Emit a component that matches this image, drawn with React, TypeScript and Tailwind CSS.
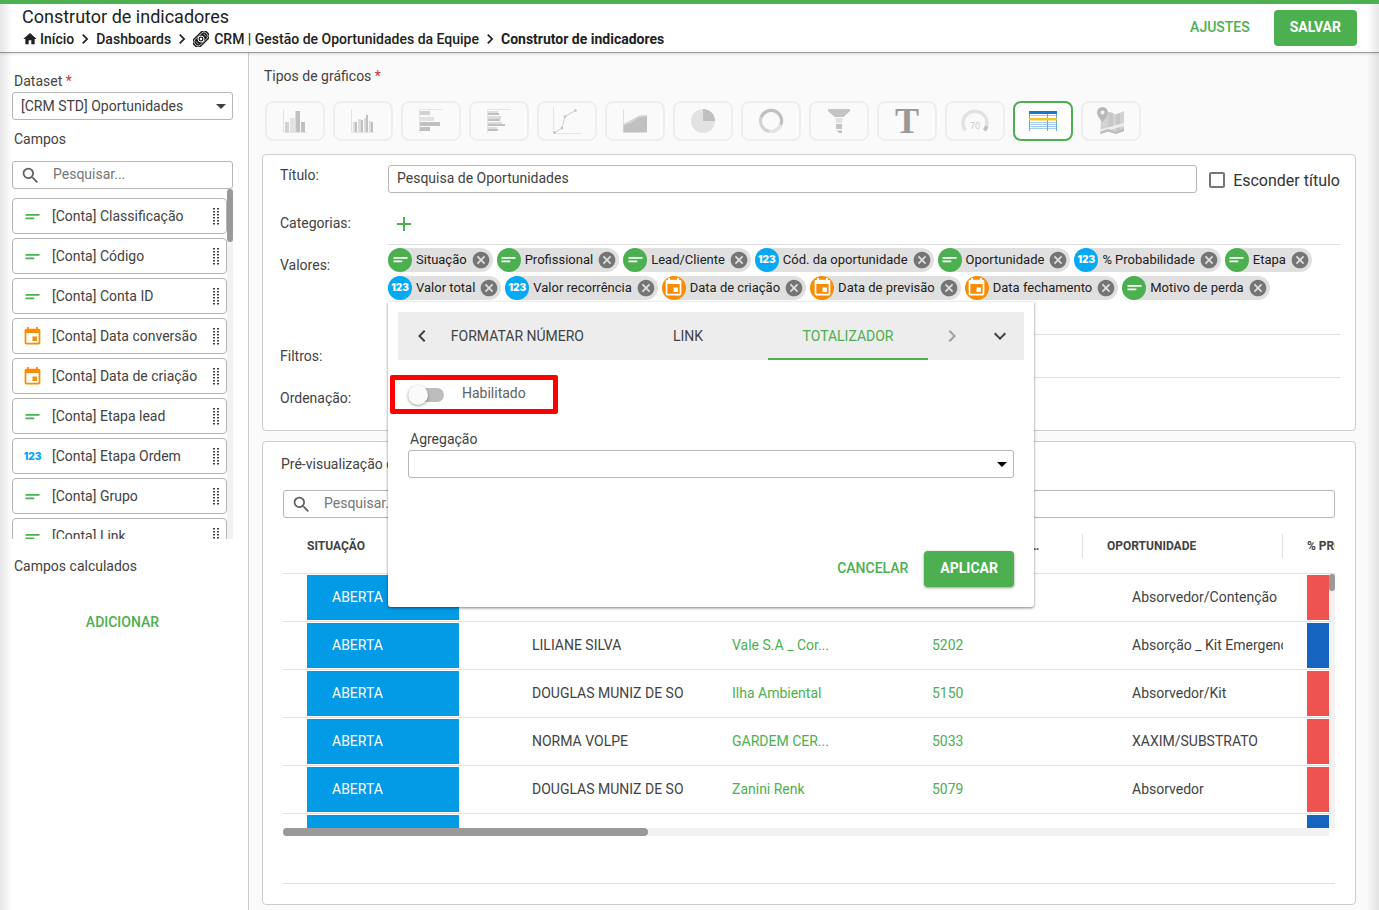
import { useState } from 'react';
import type { ReactNode } from 'react';
import {
  MdAdd,
  MdArrowDropDown,
  MdCancel,
  MdChevronLeft,
  MdChevronRight,
  MdEvent,
  MdExpandMore,
  MdHome,
  MdSearch,
  MdShortText,
} from 'react-icons/md';

type FieldType = 'text' | 'number' | 'date';

const fields: { type: FieldType; label: string }[] = [
  { type: 'text', label: '[Conta] Classificação' },
  { type: 'text', label: '[Conta] Código' },
  { type: 'text', label: '[Conta] Conta ID' },
  { type: 'date', label: '[Conta] Data conversão' },
  { type: 'date', label: '[Conta] Data de criação' },
  { type: 'text', label: '[Conta] Etapa lead' },
  { type: 'number', label: '[Conta] Etapa Ordem' },
  { type: 'text', label: '[Conta] Grupo' },
  { type: 'text', label: '[Conta] Link' },
];

const values: { type: FieldType; label: string }[] = [
  { type: 'text', label: 'Situação' },
  { type: 'text', label: 'Profissional' },
  { type: 'text', label: 'Lead/Cliente' },
  { type: 'number', label: 'Cód. da oportunidade' },
  { type: 'text', label: 'Oportunidade' },
  { type: 'number', label: '% Probabilidade' },
  { type: 'text', label: 'Etapa' },
  { type: 'number', label: 'Valor total' },
  { type: 'number', label: 'Valor recorrência' },
  { type: 'date', label: 'Data de criação' },
  { type: 'date', label: 'Data de previsão' },
  { type: 'date', label: 'Data fechamento' },
  { type: 'text', label: 'Motivo de perda' },
];

const columns = ['SITUAÇÃO', 'PROFISSIONAL', 'LEAD/CLIENTE', 'CÓD. DA OPORTUNIDADE', 'OPORTUNIDADE', '% PROBABILIDADE'];

const rows = [
  { owner: '', client: '', code: '', name: 'Absorvedor/Contenção', color: 'bg-[#ef5350]' },
  { owner: 'LILIANE SILVA', client: 'Vale S.A _ Cor...', code: '5202', name: 'Absorção _ Kit Emergencial', color: 'bg-[#1565c0]' },
  { owner: 'DOUGLAS MUNIZ DE SOUZA', client: 'Ilha Ambiental', code: '5150', name: 'Absorvedor/Kit', color: 'bg-[#ef5350]' },
  { owner: 'NORMA VOLPE', client: 'GARDEM CER...', code: '5033', name: 'XAXIM/SUBSTRATO', color: 'bg-[#ef5350]' },
  { owner: 'DOUGLAS MUNIZ DE SOUZA', client: 'Zanini Renk', code: '5079', name: 'Absorvedor', color: 'bg-[#ef5350]' },
  { owner: '', client: '', code: '', name: '', color: 'bg-[#1565c0]' },
];

const chartTypes: { name: string; width: number; height: number; art: ReactNode }[] = [
  {
    name: 'Colunas',
    width: 24,
    height: 24,
    art: (
      <>
        <path d="M.5 0v23.5H24" fill="none" stroke="#e4e4e4" />
        <path d="M2 13h4v10H2z" fill="#d2d2d2" />
        <path d="M7 9h5v14H7z" fill="#e2e2e2" />
        <path d="M12.500 2h4.500v21h-4.500zM18 13h4v10h-4z" fill="#c0c0c0" />
      </>
    ),
  },
  {
    name: 'Colunas agrupadas',
    width: 24,
    height: 24,
    art: (
      <>
        <path d="M.5 0v23.5H24" fill="none" stroke="#e4e4e4" />
        <path d="M2 13h2v10H2zM7 10h3v13H7zM13 9h2v14h-2zM18 12h2v11h-2z" fill="#dcdcdc" />
        <path d="M4 13h2v10H4zM10 11h2v12h-2zM15 6h2v17h-2zM20 13h2v10h-2z" fill="#c0c0c0" />
      </>
    ),
  },
  {
    name: 'Barras',
    width: 24,
    height: 24,
    art: (
      <>
        <path d="M24 .5H.5V24" fill="none" stroke="#e4e4e4" />
        <path d="M1 2h10v4H1z" fill="#d2d2d2" />
        <path d="M1 8h14v4H1z" fill="#e2e2e2" />
        <path d="M1 13h20v4H1zM1 18h10v4H1z" fill="#c0c0c0" />
      </>
    ),
  },
  {
    name: 'Barras agrupadas',
    width: 24,
    height: 24,
    art: (
      <>
        <path d="M24 .5H.5V24" fill="none" stroke="#e4e4e4" />
        <path d="M1 2h10v2H1zM1 7h13v3H1zM1 13h14v2H1zM1 18h9v2H1z" fill="#dcdcdc" />
        <path d="M1 4h11v2H1zM1 10h12v2H1zM1 15h17v2H1zM1 20h10v2H1z" fill="#c0c0c0" />
      </>
    ),
  },
  {
    name: 'Linhas',
    width: 28,
    height: 28,
    art: (
      <>
        <path d="M.5 0v26.5H28" fill="none" stroke="#e4e4e4" />
        <path d="M1.700 25.500 9 21l3-11.500 10.500-6" fill="none" stroke="#c8c8c8" strokeWidth="0.900" />
        <g fill="#bdbdbd">
          <circle cx="1.700" cy="25.500" r="1.200" />
          <circle cx="9" cy="21" r="1.200" />
          <circle cx="12" cy="9.500" r="1.200" />
          <circle cx="22.500" cy="3.500" r="1.200" />
        </g>
      </>
    ),
  },
  {
    name: 'Área',
    width: 24,
    height: 24,
    art: (
      <>
        <path d="M.5 0v23.500" stroke="#e0e0e0" />
        <path d="M.5 15 8 11l8-4.500L24 6v17H.5z" fill="#d6d6d6" />
        <path d="M.5 16.500 8 14l8-5.500L24 7v16.500H.5z" fill="#c0c0c0" />
      </>
    ),
  },
  {
    name: 'Pizza',
    width: 24,
    height: 24,
    art: (
      <>
        <circle cx="12" cy="12" r="12" fill="#e2e2e2" />
        <path d="M12 0a12 12 0 0 1 12 12H12z" fill="#c0c0c0" />
      </>
    ),
  },
  {
    name: 'Rosca',
    width: 24,
    height: 24,
    art: (
      <g fill="none" strokeWidth="3">
        <circle cx="12" cy="12" r="10.500" stroke="#d2d2d2" />
        <path d="M22 15.500A10.500 10.500 0 0 1 10 22.300" stroke="#e4e4e4" />
        <path d="M2.200 8.200A10.500 10.500 0 1 1 22 15.500" stroke="#c0c0c0" />
      </g>
    ),
  },
  {
    name: 'Funil',
    width: 24,
    height: 24,
    art: (
      <>
        <path d="M1 0h22v2l-6.500 6h-9L1 2z" fill="#c4c4c4" />
        <path d="M8.500 9h7.500l-1 5H9z" fill="#e2e2e2" />
        <path d="M9 15h6v5H9z" fill="#c4c4c4" />
        <path d="M9.500 21.500H15V24h-3z" fill="#c0c0c0" />
      </>
    ),
  },
  {
    name: 'Texto',
    width: 28,
    height: 26,
    art: (
      <text x="14" y="25" textAnchor="middle" fontFamily="Liberation Serif, serif" fontWeight="700" fontSize="36" fill="#999">
        T
      </text>
    ),
  },
  {
    name: 'Medidor',
    width: 28,
    height: 28,
    art: (
      <>
        <path d="M4.500 23.500a12 12 0 1 1 19 0" fill="none" stroke="#e2e2e2" strokeWidth="3.500" />
        <path d="M25.600 19a12 12 0 0 1-2.100 4.500" fill="none" stroke="#c0c0c0" strokeWidth="3.500" />
        <text x="14" y="22" textAnchor="middle" fontFamily="Open Sans, sans-serif" fontSize="9" fill="#c8c8c8">
          70
        </text>
      </>
    ),
  },
  {
    name: 'Tabela',
    width: 28,
    height: 20,
    art: (
      <>
        <path d="M0 0h28v3H0z" fill="#1976d2" />
        <path d="M0 4.500h28M0 11.500h28M0 13.500h28M0 15.500h28M0 17.500h28" stroke="#a4cdf4" />
        <path d="M.5 3v17M18.500 3v17M27.500 3v17" stroke="#64a8e8" />
        <path d="M0 7h28v2.500H0z" fill="#f4c430" />
      </>
    ),
  },
  {
    name: 'Mapa',
    width: 28,
    height: 28,
    art: (
      <>
        <path d="m4 7 8-2 7 2.500L27 4v20l-8 3-8-2.500L3.500 27z" fill="#d2d2d2" />
        <path d="m12 5 4 1v19l-5-1.500zM19 7.500 23 6v19l-4 2z" fill="#c6c6c6" />
        <path d="M3.500 22.500 27 16v3L3.500 25.500z" fill="#ededed" />
        <path d="M3.500 24.500 11 22l8 3 8-4v3l-8 3-8-2.500L3.500 27z" fill="#bdbdbd" />
        <path d="M5.500 0A5.500 5.500 0 0 1 11 5.500c0 4-5.500 9.500-5.500 9.500S0 9.500 0 5.500A5.500 5.500 0 0 1 5.500 0z" fill="#b8b8b8" />
        <circle cx="5.500" cy="5.500" r="2" fill="#f2f2f2" />
      </>
    ),
  },
];

function FieldIcon({ type }: { type: FieldType }) {
  if (type === 'date') return <MdEvent className="h-[21px] w-[21px] text-[#fb8c00]" />;
  if (type === 'number') return <span className="font-['Inter'] text-[10px] font-black text-[#03a9f4]">123</span>;
  return <MdShortText className="h-[21px] w-[21px] text-[#4caf50]" />;
}

function ChipIcon({ type }: { type: FieldType }) {
  if (type === 'date') {
    return (
      <span className="flex h-6 w-6 items-center justify-center rounded-full bg-[#fb8c00] pb-[2px] text-white">
        <MdEvent className="h-[21px] w-[21px]" />
      </span>
    );
  }
  if (type === 'number') {
    return (
      <span className="flex h-6 w-6 items-center justify-center rounded-full bg-[#03a9f4] pb-[2px] font-['Inter'] text-[10px] font-black text-white">
        123
      </span>
    );
  }
  return (
    <span className="flex h-6 w-6 items-center justify-center rounded-full bg-[#4caf50] pb-[2px] text-white">
      <MdShortText className="h-[21px] w-[21px]" />
    </span>
  );
}

function DragHandle() {
  return (
    <svg width="7" height="17" viewBox="0 0 7 17" fill="#424242">
      {[0, 3, 6, 9, 12, 15].map((y) => (
        <g key={y}>
          <rect x="1" y={y} width="2" height="1.500" />
          <rect x="5" y={y} width="2" height="1.500" />
        </g>
      ))}
    </svg>
  );
}

function TicketIcon() {
  return (
    <svg width="16" height="16" viewBox="0 0 16 16" fill="none">
      <g transform="rotate(-45 8 8)">
        <rect x="-1.500" y="2.500" width="19" height="11" rx="4" fill="#212121" />
        <rect x="0.200" y="4.200" width="15.600" height="7.600" rx="2.800" stroke="#fff" strokeWidth="0.700" />
        <path d="M2.500 6v4M13.500 6v4" stroke="#fff" strokeWidth="0.600" />
      </g>
      <circle cx="8" cy="8" r="3" stroke="#fff" strokeWidth="1" />
      <circle cx="8" cy="8" r="1.200" fill="#fff" />
    </svg>
  );
}

function Header() {
  return (
    <header className="relative z-10 flex items-center justify-between border-t-4 border-b border-t-[#4caf50] border-b-[#9e9e9e] bg-white px-[22px] shadow-sm">
      <div className="py-[2px] text-[#212121]">
        <h1 className="text-lg leading-[22px]">Construtor de indicadores</h1>
        <nav className="flex items-center text-sm leading-[22px] font-medium">
          <a href="#" className="flex items-center gap-[2px]">
            <MdHome className="h-4 w-4" />
            Início
          </a>
          <MdChevronRight className="mx-px h-5 w-5" />
          <a href="#">Dashboards</a>
          <MdChevronRight className="mx-px h-5 w-5" />
          <a href="#" className="flex items-center gap-[5px]">
            <TicketIcon />
            CRM | Gestão de Oportunidades da Equipe
          </a>
          <MdChevronRight className="mx-px h-5 w-5" />
          <span className="font-bold">Construtor de indicadores</span>
        </nav>
      </div>
      <div className="flex items-center gap-6 text-sm font-medium">
        <button className="h-9 pb-[2px] text-[#4caf50]">AJUSTES</button>
        <button className="h-9 rounded bg-[#4caf50] px-4 pb-[2px] font-bold text-white">SALVAR</button>
      </div>
    </header>
  );
}

function Sidebar() {
  return (
    <aside className="w-[249px] shrink-0 border-r border-[#ccc] bg-white pt-[17px] pr-[15px] pl-3">
      <label htmlFor="dataset" className="block pl-[2px] leading-[22px]">
        Dataset <span className="text-[#d32f2f]">*</span>
      </label>
      <div className="relative">
        <select id="dataset" className="h-7 w-full appearance-none rounded-[3px] border border-[#b5b5b5] bg-white pl-2">
          <option>[CRM STD] Oportunidades</option>
        </select>
        <MdArrowDropDown className="pointer-events-none absolute top-[2px] right-0 h-6 w-6" />
      </div>
      <label htmlFor="field-search" className="mt-2 block pl-[2px] leading-[22px]">
        Campos
      </label>
      <div className="mt-[11px] flex h-7 items-center gap-3 rounded-[3px] border border-[#b5b5b5] pl-[7px]">
        <MdSearch className="h-[21px] w-[21px] shrink-0 text-[#616161]" />
        <input id="field-search" placeholder="Pesquisar..." className="w-full min-w-0 pb-[2px] outline-none placeholder:text-[#757575]" />
      </div>
      <div className="flex h-[350px] overflow-hidden">
        <ul className="flex flex-1 flex-col gap-1 pt-[9px]">
          {fields.map((field) => (
            <li key={field.label} className="flex h-9 shrink-0 items-center rounded border border-[#b5b5b5] pr-[7px]">
              <span className="flex w-[39px] justify-center">
                <FieldIcon type={field.type} />
              </span>
              <span className="flex-1 whitespace-nowrap">{field.label}</span>
              <DragHandle />
            </li>
          ))}
        </ul>
        <div className="w-[6px] bg-[#f2f2f2]">
          <div className="h-[53px] rounded-[3px] bg-[#999]"></div>
        </div>
      </div>
      <p className="mt-4 pl-[2px] leading-[22px]">Campos calculados</p>
      <div className="mt-[27px] flex justify-center">
        <button className="h-9 px-4 font-medium text-[#4caf50]">ADICIONAR</button>
      </div>
    </aside>
  );
}

function ChartPicker() {
  return (
    <div className="mt-[14px] ml-[3px] flex flex-wrap gap-2">
      {chartTypes.map((chart) => (
        <button
          key={chart.name}
          aria-label={chart.name}
          className={`flex h-10 w-[60px] items-center justify-center rounded-lg border-2 ${
            chart.name === 'Tabela' ? 'border-[#4caf50] bg-white' : 'border-[#eee]'
          }`}
        >
          <svg width={chart.width} height={chart.height} viewBox={`0 0 ${chart.width} ${chart.height}`} className="overflow-visible">
            {chart.art}
          </svg>
        </button>
      ))}
    </div>
  );
}

function TotalizerPopup() {
  const [enabled, setEnabled] = useState(false);

  return (
    <div className="absolute top-[57px] left-0 z-10 w-[646px] rounded-b-[3px] bg-white px-[10px] pt-[10px] pb-5 shadow-[0_1px_3px_rgba(0,0,0,0.5)]">
      <div className="flex h-12 items-center bg-[#ededed]">
        <button aria-label="Anterior" className="flex w-9 justify-end">
          <MdChevronLeft className="h-6 w-6" />
        </button>
        <div role="tablist" className="flex h-full flex-1 justify-end whitespace-nowrap">
          <button role="tab" className="pr-6">FORMATAR NÚMERO</button>
          <button role="tab" className="w-40">LINK</button>
          <button role="tab" aria-selected="true" className="w-40 border-b-2 border-[#4caf50] pt-[2px] text-[#4caf50]">TOTALIZADOR</button>
        </div>
        <button aria-label="Próximo" className="flex w-12 justify-center text-[#9e9e9e]">
          <MdChevronRight className="h-6 w-6" />
        </button>
        <button aria-label="Expandir" className="flex w-12 justify-center">
          <MdExpandMore className="h-6 w-6" />
        </button>
      </div>

      <div className="mt-[15px] -ml-2 flex h-[39px] w-[168px] items-center rounded-[2px] border-5 border-[#f00] pl-[13px]">
        <label className="flex items-center gap-[18px] text-[#616161]">
          <input
            type="checkbox"
            role="switch"
            checked={enabled}
            onChange={(e) => setEnabled(e.target.checked)}
            className="flex h-[14px] w-9 appearance-none items-center rounded-full bg-[#bdbdbd] before:h-5 before:w-5 before:shrink-0 before:rounded-full before:bg-[#fafafa] before:shadow-[0_1px_3px_rgba(0,0,0,0.4)] checked:before:ml-4"
          />
          <span className="pb-[3px]">Habilitado</span>
        </label>
      </div>

      <label htmlFor="aggregation" className="mt-[15px] ml-3 block leading-[21px]">
        Agregação
      </label>
      <div className="relative mx-[10px]">
        <select id="aggregation" className="h-7 w-full appearance-none rounded-[3px] border border-[#b5b5b5] bg-white pl-2">
          <option></option>
        </select>
        <MdArrowDropDown className="pointer-events-none absolute top-[2px] right-0 h-6 w-6 text-black" />
      </div>
      <div className="mt-[73px] mr-[10px] flex justify-end">
        <button className="h-9 px-4 pb-[2px] font-medium text-[#4caf50]">CANCELAR</button>
        <button className="h-9 rounded bg-[#4caf50] px-4 pb-[2px] font-bold text-white shadow-[0_1px_3px_rgba(0,0,0,0.4)]">APLICAR</button>
      </div>
    </div>
  );
}

function Settings() {
  return (
    <section className="mt-[13px] rounded border border-[#ccc] bg-white pt-[10px] pr-[15px] pb-[10px] pl-[17px]">
      <div className="mb-2 flex">
        <label htmlFor="title" className="w-[108px] leading-5">
          Título:
        </label>
        <input id="title" defaultValue="Pesquisa de Oportunidades" className="h-7 flex-1 rounded-[3px] border border-[#b5b5b5] px-2 pb-[2px]" />
        <label className="ml-3 flex h-[30px] items-center gap-2 text-base text-[#333]">
          <input type="checkbox" className="h-4 w-4 appearance-none rounded-[2px] border-2 border-[#757575]" />
          <span className="pt-[2px]">Esconder título</span>
        </label>
      </div>
      <div className="-mt-[2px] flex h-11 items-center">
        <span className="w-[108px]">Categorias:</span>
        <div className="flex h-full flex-1 items-center border-b border-[#e0e0e0] pt-[2px] pl-1">
          <button aria-label="Adicionar categoria" className="text-[#4caf50]">
            <MdAdd className="h-6 w-6" />
          </button>
        </div>
      </div>
      <div className="flex h-[90px]">
        <span className="w-[108px] shrink-0 pt-[10px] leading-5">Valores:</span>
        <div className="relative flex-1 border-b border-[#e0e0e0] pt-[3px]">
          <div className="flex flex-wrap gap-1">
            {values.map((value) => (
              <div key={value.label} className="flex h-6 items-center rounded-full bg-[#e0e0e0] pr-[2px] text-[13px] text-[#212121]">
                <ChipIcon type={value.type} />
                <span className="pr-1 pl-1">{value.label}</span>
                <button aria-label={`Remover ${value.label}`} className="text-[#757575]">
                  <MdCancel className="h-5 w-5" />
                </button>
              </div>
            ))}
          </div>
          <TotalizerPopup />
        </div>
      </div>
      <div className="flex h-[43px] items-center">
        <span className="w-[108px] pb-[2px]">Filtros:</span>
        <div className="h-full flex-1 border-b border-[#e0e0e0]"></div>
      </div>
      <div className="flex h-[42px] items-center">
        <span className="w-[108px] pb-[2px]">Ordenação:</span>
      </div>
    </section>
  );
}

function Preview() {
  return (
    <section className="mt-[10px] rounded border border-[#ccc] bg-white pt-[11px] pr-5 pb-5 pl-5">
      <h2 className="-ml-[2px] leading-[22px]">Pré-visualização do gráfico</h2>
      <div className="mt-[15px] flex h-7 items-center gap-3 rounded-[3px] border border-[#b5b5b5] pl-[7px]">
        <MdSearch className="h-[21px] w-[21px] shrink-0 text-[#616161]" />
        <input aria-label="Pesquisar" placeholder="Pesquisar..." className="w-full pb-[2px] outline-none placeholder:text-[#757575]" />
      </div>

      <div className="relative h-[310px] overflow-hidden">
        <table className="w-[1200px] table-fixed border-separate border-spacing-0">
          <thead>
            <tr className="h-14 text-left text-xs">
              {columns.map((column) => (
                <th key={column} className="border-b border-[#e0e0e0] p-0 font-bold">
                  <div className="flex h-6 items-center border-r border-[#e0e0e0] pl-6">
                    <span className="max-w-[136px] truncate">{column}</span>
                  </div>
                </th>
              ))}
            </tr>
          </thead>
          <tbody>
            {rows.map((row, index) => (
              <tr key={index} className="h-12 whitespace-nowrap">
                <td className="border-b border-[#e0e0e0] py-px pr-6 pl-6">
                  <div className="flex h-[45px] items-center bg-[#039be5] pb-[2px] pl-[25px] text-white">ABERTA</div>
                </td>
                <td className="overflow-hidden border-b border-[#e0e0e0] p-0 pb-[2px] pl-[49px]">{row.owner}</td>
                <td className="overflow-hidden border-b border-[#e0e0e0] p-0 pb-[2px] pl-[49px] text-[#4caf50]">{row.client}</td>
                <td className="overflow-hidden border-b border-[#e0e0e0] p-0 pb-[2px] pl-[49px] text-[#4caf50]">{row.code}</td>
                <td className="overflow-hidden border-b border-[#e0e0e0] p-0 pb-[2px] pl-[49px]">{row.name}</td>
                <td className="border-b border-[#e0e0e0] py-px pr-6 pl-6">
                  <div className={`h-[45px] ${row.color}`}></div>
                </td>
              </tr>
            ))}
          </tbody>
        </table>
        <div className="absolute top-14 right-0 bottom-0 w-[6px] bg-[#f2f2f2]">
          <div className="h-[17px] rounded-[3px] bg-[#999]"></div>
        </div>
      </div>
      <div className="mr-[6px] h-2 bg-[#f2f2f2]">
        <div className="h-2 w-[365px] rounded bg-[#999]"></div>
      </div>
      <div className="mt-[47px] border-b border-[#e0e0e0]"></div>
    </section>
  );
}

export default function App() {
  return (
    <div className="relative flex min-h-screen flex-col bg-[#fafafa] font-['Roboto',sans-serif] text-sm text-[#424242]">
      <Header />
      <div className="flex flex-1">
        <Sidebar />
        <main className="min-w-0 flex-1 pt-3 pr-[23px] pb-[5px] pl-[13px]">
          <p className="pl-[2px] leading-[22px]">
            Tipos de gráficos <span className="text-[#d32f2f]">*</span>
          </p>
          <ChartPicker />
          <Settings />
          <Preview />
        </main>
      </div>
      {/* edge shadows */}
      <div className="pointer-events-none absolute top-1 bottom-0 left-0 z-20 w-3 bg-linear-to-r from-black/10 to-transparent"></div>
      <div className="pointer-events-none absolute top-1 right-0 bottom-0 z-20 w-3 bg-linear-to-l from-black/10 to-transparent"></div>
    </div>
  );
}
